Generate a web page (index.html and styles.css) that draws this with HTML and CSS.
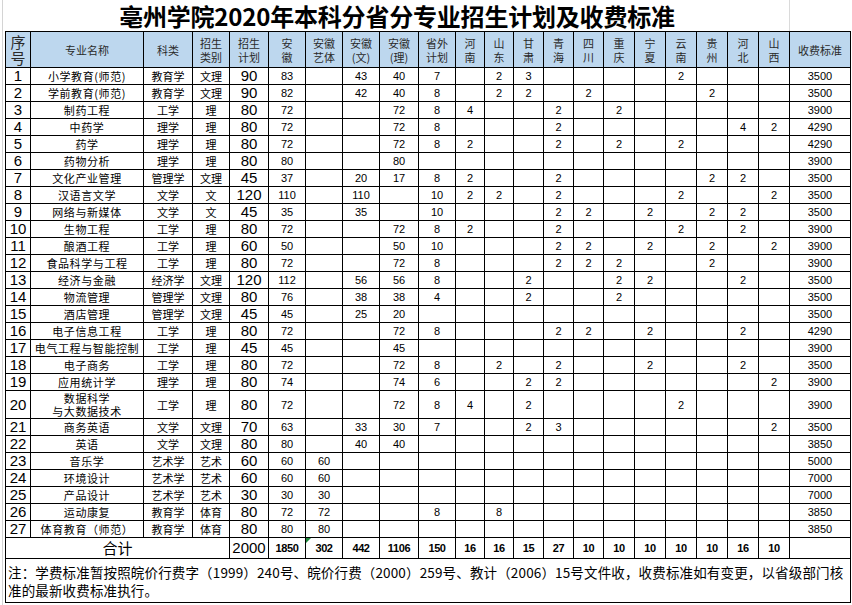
FILE: index.html
```html
<!DOCTYPE html>
<html lang="zh-CN">
<head>
<meta charset="utf-8">
<title>亳州学院2020年本科分省分专业招生计划及收费标准</title>
<link rel="stylesheet" href="styles.css">
</head>
<body>
<div class="sheet">
  <div class="title-row">
    <div class="title">亳州学院2020年本科分省分专业招生计划及收费标准</div>
  </div>
  <table class="plan">
    <colgroup>
      <col class="c25"><col class="c113"><col class="c49"><col class="c37"><col class="c39">
      <col class="c37"><col class="c37"><col class="c37"><col class="c39"><col class="c37">
      <col class="c29"><col class="c29"><col class="c30"><col class="c30"><col class="c30">
      <col class="c31"><col class="c31"><col class="c31"><col class="c31"><col class="c31"><col class="c31">
      <col class="c61">
    </colgroup>
    <thead>
      <tr class="head">
        <th class="h-no">序<br>号</th><th>专业名称</th><th>科类</th><th>招生<br>类别</th><th>招生<br>计划</th>
        <th>安<br>徽</th><th>安徽<br>艺体</th><th>安徽<br>(文)</th><th>安徽<br>(理)</th><th>省外<br>计划</th>
        <th>河<br>南</th><th>山<br>东</th><th>甘<br>肃</th><th>青<br>海</th><th>四<br>川</th>
        <th>重<br>庆</th><th>宁<br>夏</th><th>云<br>南</th><th>贵<br>州</th><th>河<br>北</th><th>山<br>西</th>
        <th>收费标准</th>
      </tr>
    </thead>
    <tbody>
      <tr class="r"><td class="no">1</td><td class="nm">小学教育(师范)</td><td class="cn">教育学</td><td class="cn">文理</td><td class="big">90</td><td>83</td><td></td><td>43</td><td>40</td><td>7</td><td></td><td>2</td><td>3</td><td></td><td></td><td></td><td></td><td>2</td><td></td><td></td><td></td><td>3500</td></tr>
      <tr class="r"><td class="no">2</td><td class="nm">学前教育(师范)</td><td class="cn">教育学</td><td class="cn">文理</td><td class="big">90</td><td>82</td><td></td><td>42</td><td>40</td><td>8</td><td></td><td>2</td><td>2</td><td></td><td>2</td><td></td><td></td><td></td><td>2</td><td></td><td></td><td>3500</td></tr>
      <tr class="r"><td class="no">3</td><td class="nm">制药工程</td><td class="cn">工学</td><td class="cn">理</td><td class="big">80</td><td>72</td><td></td><td></td><td>72</td><td>8</td><td>4</td><td></td><td></td><td>2</td><td></td><td>2</td><td></td><td></td><td></td><td></td><td></td><td>3900</td></tr>
      <tr class="r"><td class="no">4</td><td class="nm">中药学</td><td class="cn">理学</td><td class="cn">理</td><td class="big">80</td><td>72</td><td></td><td></td><td>72</td><td>8</td><td></td><td></td><td></td><td>2</td><td></td><td></td><td></td><td></td><td></td><td>4</td><td>2</td><td>4290</td></tr>
      <tr class="r"><td class="no">5</td><td class="nm">药学</td><td class="cn">理学</td><td class="cn">理</td><td class="big">80</td><td>72</td><td></td><td></td><td>72</td><td>8</td><td>2</td><td></td><td></td><td>2</td><td></td><td>2</td><td></td><td>2</td><td></td><td></td><td></td><td>4290</td></tr>
      <tr class="r"><td class="no">6</td><td class="nm">药物分析</td><td class="cn">理学</td><td class="cn">理</td><td class="big">80</td><td>80</td><td></td><td></td><td>80</td><td></td><td></td><td></td><td></td><td></td><td></td><td></td><td></td><td></td><td></td><td></td><td></td><td>3900</td></tr>
      <tr class="r"><td class="no">7</td><td class="nm">文化产业管理</td><td class="cn">管理学</td><td class="cn">文理</td><td class="big">45</td><td>37</td><td></td><td>20</td><td>17</td><td>8</td><td>2</td><td></td><td></td><td>2</td><td></td><td></td><td></td><td></td><td>2</td><td>2</td><td></td><td>3500</td></tr>
      <tr class="r"><td class="no">8</td><td class="nm">汉语言文学</td><td class="cn">文学</td><td class="cn">文</td><td class="big">120</td><td>110</td><td></td><td>110</td><td></td><td>10</td><td>2</td><td>2</td><td></td><td>2</td><td></td><td></td><td></td><td>2</td><td></td><td></td><td>2</td><td>3500</td></tr>
      <tr class="r"><td class="no">9</td><td class="nm">网络与新媒体</td><td class="cn">文学</td><td class="cn">文</td><td class="big">45</td><td>35</td><td></td><td>35</td><td></td><td>10</td><td></td><td></td><td></td><td>2</td><td>2</td><td></td><td>2</td><td></td><td>2</td><td>2</td><td></td><td>3500</td></tr>
      <tr class="r"><td class="no">10</td><td class="nm">生物工程</td><td class="cn">工学</td><td class="cn">理</td><td class="big">80</td><td>72</td><td></td><td></td><td>72</td><td>8</td><td>2</td><td></td><td></td><td>2</td><td></td><td></td><td></td><td>2</td><td></td><td>2</td><td></td><td>3900</td></tr>
      <tr class="r"><td class="no">11</td><td class="nm">酿酒工程</td><td class="cn">工学</td><td class="cn">理</td><td class="big">60</td><td>50</td><td></td><td></td><td>50</td><td>10</td><td></td><td></td><td></td><td>2</td><td>2</td><td></td><td>2</td><td></td><td>2</td><td></td><td>2</td><td>3900</td></tr>
      <tr class="r"><td class="no">12</td><td class="nm">食品科学与工程</td><td class="cn">工学</td><td class="cn">理</td><td class="big">80</td><td>72</td><td></td><td></td><td>72</td><td>8</td><td></td><td></td><td></td><td>2</td><td>2</td><td>2</td><td></td><td></td><td>2</td><td></td><td></td><td>3900</td></tr>
      <tr class="r"><td class="no">13</td><td class="nm">经济与金融</td><td class="cn">经济学</td><td class="cn">文理</td><td class="big">120</td><td>112</td><td></td><td>56</td><td>56</td><td>8</td><td></td><td></td><td>2</td><td></td><td></td><td>2</td><td>2</td><td></td><td></td><td>2</td><td></td><td>3500</td></tr>
      <tr class="r"><td class="no">14</td><td class="nm">物流管理</td><td class="cn">管理学</td><td class="cn">文理</td><td class="big">80</td><td>76</td><td></td><td>38</td><td>38</td><td>4</td><td></td><td></td><td>2</td><td></td><td></td><td>2</td><td></td><td></td><td></td><td></td><td></td><td>3500</td></tr>
      <tr class="r"><td class="no">15</td><td class="nm">酒店管理</td><td class="cn">管理学</td><td class="cn">文理</td><td class="big">45</td><td>45</td><td></td><td>25</td><td>20</td><td></td><td></td><td></td><td></td><td></td><td></td><td></td><td></td><td></td><td></td><td></td><td></td><td>3500</td></tr>
      <tr class="r"><td class="no">16</td><td class="nm">电子信息工程</td><td class="cn">工学</td><td class="cn">理</td><td class="big">80</td><td>72</td><td></td><td></td><td>72</td><td>8</td><td></td><td></td><td></td><td>2</td><td>2</td><td></td><td>2</td><td></td><td></td><td>2</td><td></td><td>4290</td></tr>
      <tr class="r"><td class="no mark">17</td><td class="nm">电气工程与智能控制</td><td class="cn">工学</td><td class="cn">理</td><td class="big">45</td><td>45</td><td></td><td></td><td>45</td><td></td><td></td><td></td><td></td><td></td><td></td><td></td><td></td><td></td><td></td><td></td><td></td><td>3900</td></tr>
      <tr class="r"><td class="no">18</td><td class="nm">电子商务</td><td class="cn">工学</td><td class="cn">理</td><td class="big">80</td><td>72</td><td></td><td></td><td>72</td><td>8</td><td></td><td>2</td><td></td><td>2</td><td></td><td></td><td>2</td><td></td><td></td><td>2</td><td></td><td>3500</td></tr>
      <tr class="r"><td class="no">19</td><td class="nm">应用统计学</td><td class="cn">理学</td><td class="cn">理</td><td class="big">80</td><td>74</td><td></td><td></td><td>74</td><td>6</td><td></td><td></td><td>2</td><td>2</td><td></td><td></td><td></td><td></td><td></td><td></td><td>2</td><td>3900</td></tr>
      <tr class="r2"><td class="no">20</td><td class="nm two">数据科学<br>与大数据技术</td><td class="cn">工学</td><td class="cn">理</td><td class="big">80</td><td>72</td><td></td><td></td><td>72</td><td>8</td><td>4</td><td></td><td>2</td><td></td><td></td><td></td><td></td><td>2</td><td></td><td></td><td></td><td>3900</td></tr>
      <tr class="r"><td class="no">21</td><td class="nm">商务英语</td><td class="cn">文学</td><td class="cn">文理</td><td class="big">70</td><td>63</td><td></td><td>33</td><td>30</td><td>7</td><td></td><td></td><td>2</td><td>3</td><td></td><td></td><td></td><td></td><td></td><td></td><td>2</td><td>3500</td></tr>
      <tr class="r"><td class="no">22</td><td class="nm">英语</td><td class="cn">文学</td><td class="cn">文理</td><td class="big">80</td><td>80</td><td></td><td>40</td><td>40</td><td></td><td></td><td></td><td></td><td></td><td></td><td></td><td></td><td></td><td></td><td></td><td></td><td>3850</td></tr>
      <tr class="r"><td class="no">23</td><td class="nm">音乐学</td><td class="cn">艺术学</td><td class="cn">艺术</td><td class="big">60</td><td>60</td><td>60</td><td></td><td></td><td></td><td></td><td></td><td></td><td></td><td></td><td></td><td></td><td></td><td></td><td></td><td></td><td>5000</td></tr>
      <tr class="r"><td class="no">24</td><td class="nm">环境设计</td><td class="cn">艺术学</td><td class="cn">艺术</td><td class="big">60</td><td>60</td><td>60</td><td></td><td></td><td></td><td></td><td></td><td></td><td></td><td></td><td></td><td></td><td></td><td></td><td></td><td></td><td>7000</td></tr>
      <tr class="r"><td class="no">25</td><td class="nm">产品设计</td><td class="cn">艺术学</td><td class="cn">艺术</td><td class="big">30</td><td>30</td><td>30</td><td></td><td></td><td></td><td></td><td></td><td></td><td></td><td></td><td></td><td></td><td></td><td></td><td></td><td></td><td>7000</td></tr>
      <tr class="r"><td class="no">26</td><td class="nm">运动康复</td><td class="cn">教育学</td><td class="cn">体育</td><td class="big">80</td><td>72</td><td>72</td><td></td><td></td><td>8</td><td></td><td>8</td><td></td><td></td><td></td><td></td><td></td><td></td><td></td><td></td><td></td><td>3850</td></tr>
      <tr class="r"><td class="no">27</td><td class="nm">体育教育（师范）</td><td class="cn">教育学</td><td class="cn">体育</td><td class="big">80</td><td>80</td><td>80</td><td></td><td></td><td></td><td></td><td></td><td></td><td></td><td></td><td></td><td></td><td></td><td></td><td></td><td></td><td>3850</td></tr>
      <tr class="total"><td colspan="4" class="sum-label">合计</td><td class="sum-big">2000</td><td class="b">1850</td><td class="b tri">302</td><td class="b">442</td><td class="b">1106</td><td class="b">150</td><td class="b">16</td><td class="b">16</td><td class="b">15</td><td class="b">27</td><td class="b">10</td><td class="b">10</td><td class="b">10</td><td class="b">10</td><td class="b">10</td><td class="b">16</td><td class="b">10</td><td></td></tr>
      <tr class="note"><td colspan="22" class="note-cell">注：学费标准暂按照皖价行费字（1999）240号、皖价行费（2000）259号、教计（2006）15号文件收，收费标准如有变更，以省级部门核<br>准的最新收费标准执行。</td></tr>
    </tbody>
  </table>
</div>
</body>
</html>
```

FILE: styles.css
```css
html, body {
  margin: 0;
  padding: 0;
  background: #ffffff;
}

body {
  font-family: "Liberation Sans", "Noto Sans CJK SC", sans-serif;
  color: #000;
}

.sheet {
  margin-left: 2px;
  padding-left: 2px;
  border-left: 1px solid #d4d4d4;
  width: 846px;
  min-height: 605px;
}

.title-row {
  display: flex;
  height: 31px;
}

.title {
  width: 784px;
  height: 31px;
  border-right: 1px solid #dadada;
  text-align: center;
  font-family: "Noto Sans CJK SC", sans-serif;
  font-weight: bold;
  font-size: 24px;
  line-height: 32px;
  letter-spacing: -0.2px;
  color: #000;
}

.plan {
  border-collapse: collapse;
  table-layout: fixed;
  width: 846px;
}

.c25 { width: 25px; }
.c113 { width: 113px; }
.c49 { width: 49px; }
.c37 { width: 37px; }
.c39 { width: 39px; }
.c29 { width: 29px; }
.c30 { width: 30px; }
.c31 { width: 31px; }
.c61 { width: 61px; }

.plan th,
.plan td {
  border: 1px solid #000;
  padding: 0;
  text-align: center;
  vertical-align: middle;
  white-space: nowrap;
  overflow: hidden;
}

.head th {
  height: 35px;
  background: #bdd7ee;
  font-family: "Noto Sans CJK SC", sans-serif;
  font-weight: normal;
  font-size: 11px;
  line-height: 14px;
  color: #2a2a2a;
}

.head th.h-no {
  font-size: 15px;
  line-height: 16px;
}

.plan td {
  font-size: 11px;
  line-height: 14px;
}

.r td {
  height: 16px;
}

.r2 td {
  height: 27px;
}

td.no {
  font-size: 15px;
}

td.big {
  font-size: 15px;
}

td.nm {
  font-family: "Noto Sans CJK SC", sans-serif;
  font-size: 11px;
  letter-spacing: 0.6px;
}

td.nm.two {
  line-height: 13px;
}

td.cn {
  font-family: "Noto Sans CJK SC", sans-serif;
  font-size: 11px;
}

td.mark {
  position: relative;
}

td.mark::before {
  content: "";
  position: absolute;
  left: -3px;
  top: 0;
  bottom: 0;
  width: 2px;
  background: #22a052;
}

.total td {
  height: 20px;
}

td.sum-label {
  font-family: "Noto Sans CJK SC", sans-serif;
  font-size: 15px;
}

td.sum-big {
  font-size: 15px;
}

td.b {
  font-weight: bold;
  font-size: 11px;
  letter-spacing: -0.4px;
}

td.tri {
  position: relative;
}

td.tri::before {
  content: "";
  position: absolute;
  left: 0;
  top: 0;
  border-top: 5px solid #1e8a3c;
  border-right: 5px solid transparent;
}

.note td {
  height: 43px;
}

td.note-cell {
  text-align: left;
  font-family: "Noto Sans CJK SC", sans-serif;
  font-size: 13.5px;
  line-height: 18px;
  padding: 0 1px 0 2px;
  letter-spacing: 0.15px;
}
```
